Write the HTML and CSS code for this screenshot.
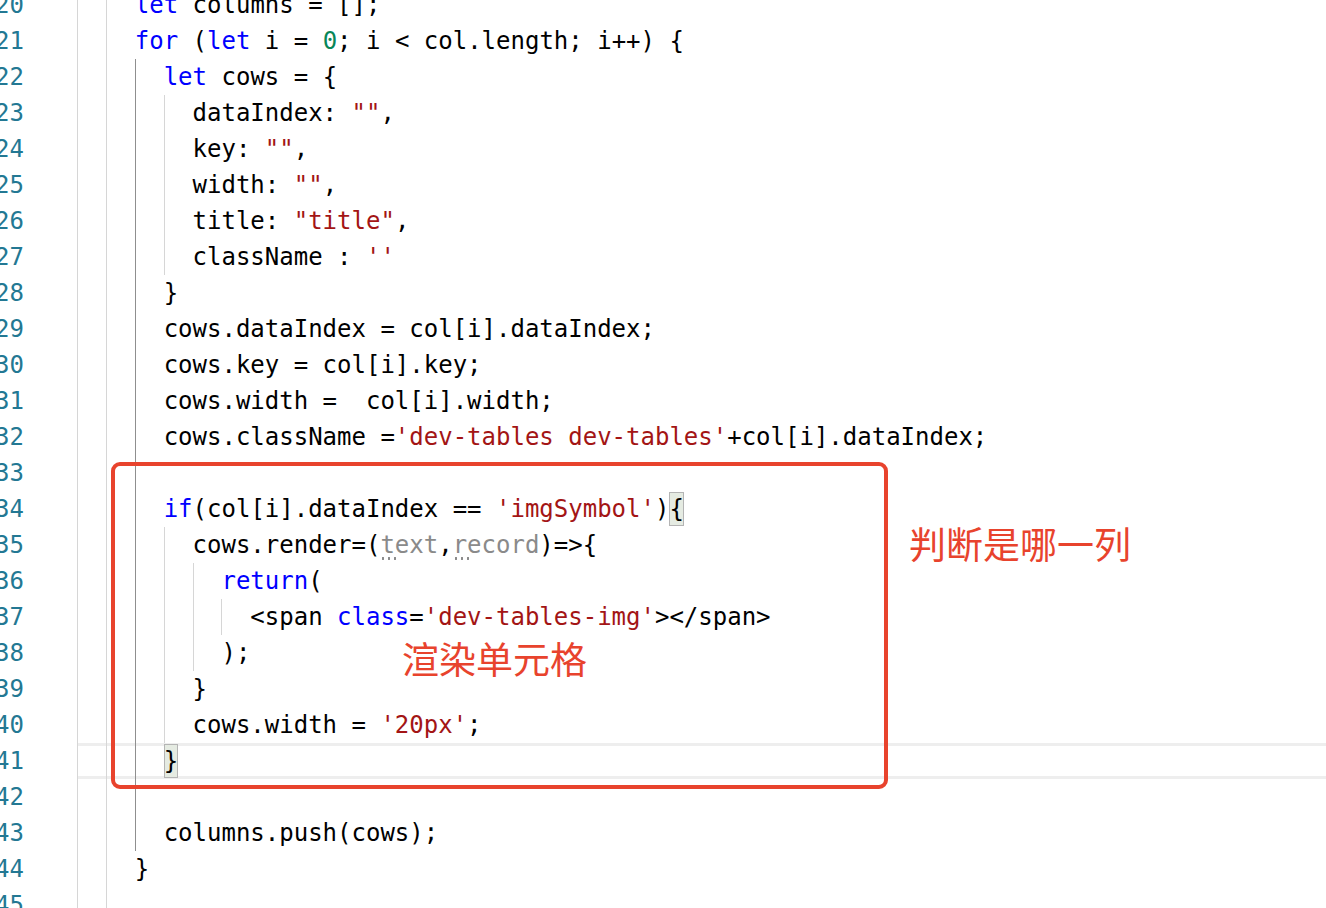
FILE: index.html
```html
<!DOCTYPE html>
<html lang="zh">
<head>
<meta charset="utf-8">
<title>editor</title>
<link rel="stylesheet" href="styles.css">
</head>
<body>
<div class="editor">
  <div class="line"><span class="ln">20</span><span class="code"><span class="ig"></span><span class="ig"></span><span class="k">let</span> columns = [];</span></div>
  <div class="line"><span class="ln">21</span><span class="code"><span class="ig"></span><span class="ig"></span><span class="k">for</span> (<span class="k">let</span> i = <span class="n">0</span>; i &lt; col.length; i++) {</span></div>
  <div class="line"><span class="ln">22</span><span class="code"><span class="ig"></span><span class="ig"></span><span class="ig a"></span><span class="k">let</span> cows = {</span></div>
  <div class="line"><span class="ln">23</span><span class="code"><span class="ig"></span><span class="ig"></span><span class="ig a"></span><span class="ig"></span>dataIndex: <span class="s">""</span>,</span></div>
  <div class="line"><span class="ln">24</span><span class="code"><span class="ig"></span><span class="ig"></span><span class="ig a"></span><span class="ig"></span>key: <span class="s">""</span>,</span></div>
  <div class="line"><span class="ln">25</span><span class="code"><span class="ig"></span><span class="ig"></span><span class="ig a"></span><span class="ig"></span>width: <span class="s">""</span>,</span></div>
  <div class="line"><span class="ln">26</span><span class="code"><span class="ig"></span><span class="ig"></span><span class="ig a"></span><span class="ig"></span>title: <span class="s">"title"</span>,</span></div>
  <div class="line"><span class="ln">27</span><span class="code"><span class="ig"></span><span class="ig"></span><span class="ig a"></span><span class="ig"></span>className : <span class="s">''</span></span></div>
  <div class="line"><span class="ln">28</span><span class="code"><span class="ig"></span><span class="ig"></span><span class="ig a"></span>}</span></div>
  <div class="line"><span class="ln">29</span><span class="code"><span class="ig"></span><span class="ig"></span><span class="ig a"></span>cows.dataIndex = col[i].dataIndex;</span></div>
  <div class="line"><span class="ln">30</span><span class="code"><span class="ig"></span><span class="ig"></span><span class="ig a"></span>cows.key = col[i].key;</span></div>
  <div class="line"><span class="ln">31</span><span class="code"><span class="ig"></span><span class="ig"></span><span class="ig a"></span>cows.width =  col[i].width;</span></div>
  <div class="line"><span class="ln">32</span><span class="code"><span class="ig"></span><span class="ig"></span><span class="ig a"></span>cows.className =<span class="s">'dev-tables dev-tables'</span>+col[i].dataIndex;</span></div>
  <div class="line"><span class="ln">33</span><span class="code"><span class="ig"></span><span class="ig"></span><span class="ig a"></span></span></div>
  <div class="line"><span class="ln">34</span><span class="code"><span class="ig"></span><span class="ig"></span><span class="ig a"></span><span class="k">if</span>(col[i].dataIndex == <span class="s">'imgSymbol'</span>)<span class="bm">{</span></span></div>
  <div class="line"><span class="ln">35</span><span class="code"><span class="ig"></span><span class="ig"></span><span class="ig a"></span><span class="ig"></span>cows.render=(<span class="un">text</span>,<span class="un">record</span>)=&gt;{</span></div>
  <div class="line"><span class="ln">36</span><span class="code"><span class="ig"></span><span class="ig"></span><span class="ig a"></span><span class="ig"></span><span class="ig"></span><span class="k">return</span>(</span></div>
  <div class="line"><span class="ln">37</span><span class="code"><span class="ig"></span><span class="ig"></span><span class="ig a"></span><span class="ig"></span><span class="ig"></span><span class="ig"></span>&lt;span <span class="k">class</span>=<span class="s">'dev-tables-img'</span>&gt;&lt;/span&gt;</span></div>
  <div class="line"><span class="ln">38</span><span class="code"><span class="ig"></span><span class="ig"></span><span class="ig a"></span><span class="ig"></span><span class="ig"></span>);</span></div>
  <div class="line"><span class="ln">39</span><span class="code"><span class="ig"></span><span class="ig"></span><span class="ig a"></span><span class="ig"></span>}</span></div>
  <div class="line"><span class="ln">40</span><span class="code"><span class="ig"></span><span class="ig"></span><span class="ig a"></span><span class="ig"></span>cows.width = <span class="s">'20px'</span>;</span></div>
  <div class="line"><span class="ln">41</span><span class="code current"><span class="ig"></span><span class="ig"></span><span class="ig a"></span><span class="bm">}</span></span></div>
  <div class="line"><span class="ln">42</span><span class="code"><span class="ig"></span><span class="ig"></span><span class="ig a"></span></span></div>
  <div class="line"><span class="ln">43</span><span class="code"><span class="ig"></span><span class="ig"></span><span class="ig a"></span>columns.push(cows);</span></div>
  <div class="line"><span class="ln">44</span><span class="code"><span class="ig"></span><span class="ig"></span>}</span></div>
  <div class="line"><span class="ln">45</span><span class="code"><span class="ig"></span><span class="ig"></span></span></div>

  <div class="markbox"></div>
  <div class="note note-1">判断是哪一列</div>
  <div class="note note-2">渲染单元格</div>
</div>
</body>
</html>
```

FILE: styles.css
```css
html, body {
  margin: 0;
  padding: 0;
  background: #ffffff;
  width: 1326px;
  height: 908px;
  overflow: hidden;
}

.editor {
  position: relative;
  margin-top: -13px;
  font-family: "DejaVu Sans Mono", "Liberation Mono", monospace;
  font-size: 24px;
  color: #000000;
}

.line {
  display: flex;
  height: 36px;
  line-height: 36px;
}

.ln {
  display: flex;
  justify-content: flex-end;
  width: 24px;
  flex: none;
  color: #237893;
  margin-right: 53px;
  white-space: nowrap;
}

.code {
  flex: 1;
  white-space: pre;
  height: 36px;
}

.code.current {
  box-shadow: inset 0 3px 0 #eeeeee, inset 0 -3px 0 #eeeeee;
}

.ig {
  display: inline-block;
  width: 2ch;
  height: 36px;
  vertical-align: top;
  box-sizing: border-box;
  border-left: 1px solid #d6d6d6;
}

.ig.a {
  border-left-color: #8f8f8f;
}

.k { color: #0000ff; }
.s { color: #a31515; }
.n { color: #098658; }

.un {
  color: #8a8a8a;
  position: relative;
}

.un::after {
  content: "";
  position: absolute;
  left: 0;
  top: 26px;
  width: 18px;
  height: 3px;
  background-image: radial-gradient(circle, #8a8a8a 1.1px, transparent 1.5px);
  background-size: 6px 3px;
  background-repeat: repeat-x;
}

.bm {
  background: #e5ebe2;
  box-shadow: inset 0 0 0 1px #b4b4b4;
  padding: 3px 0;
}

.markbox {
  position: absolute;
  left: 111px;
  top: 475px;
  width: 777px;
  height: 327px;
  box-sizing: border-box;
  border: 4px solid #e8432d;
  border-radius: 9px;
}

.note {
  position: absolute;
  font-family: "Noto Sans CJK SC", "Noto Sans", sans-serif;
  font-size: 37px;
  line-height: 40px;
  color: #e8432d;
  white-space: nowrap;
}

.note-1 {
  left: 909px;
  top: 536px;
}

.note-2 {
  left: 402px;
  top: 651px;
}
```
